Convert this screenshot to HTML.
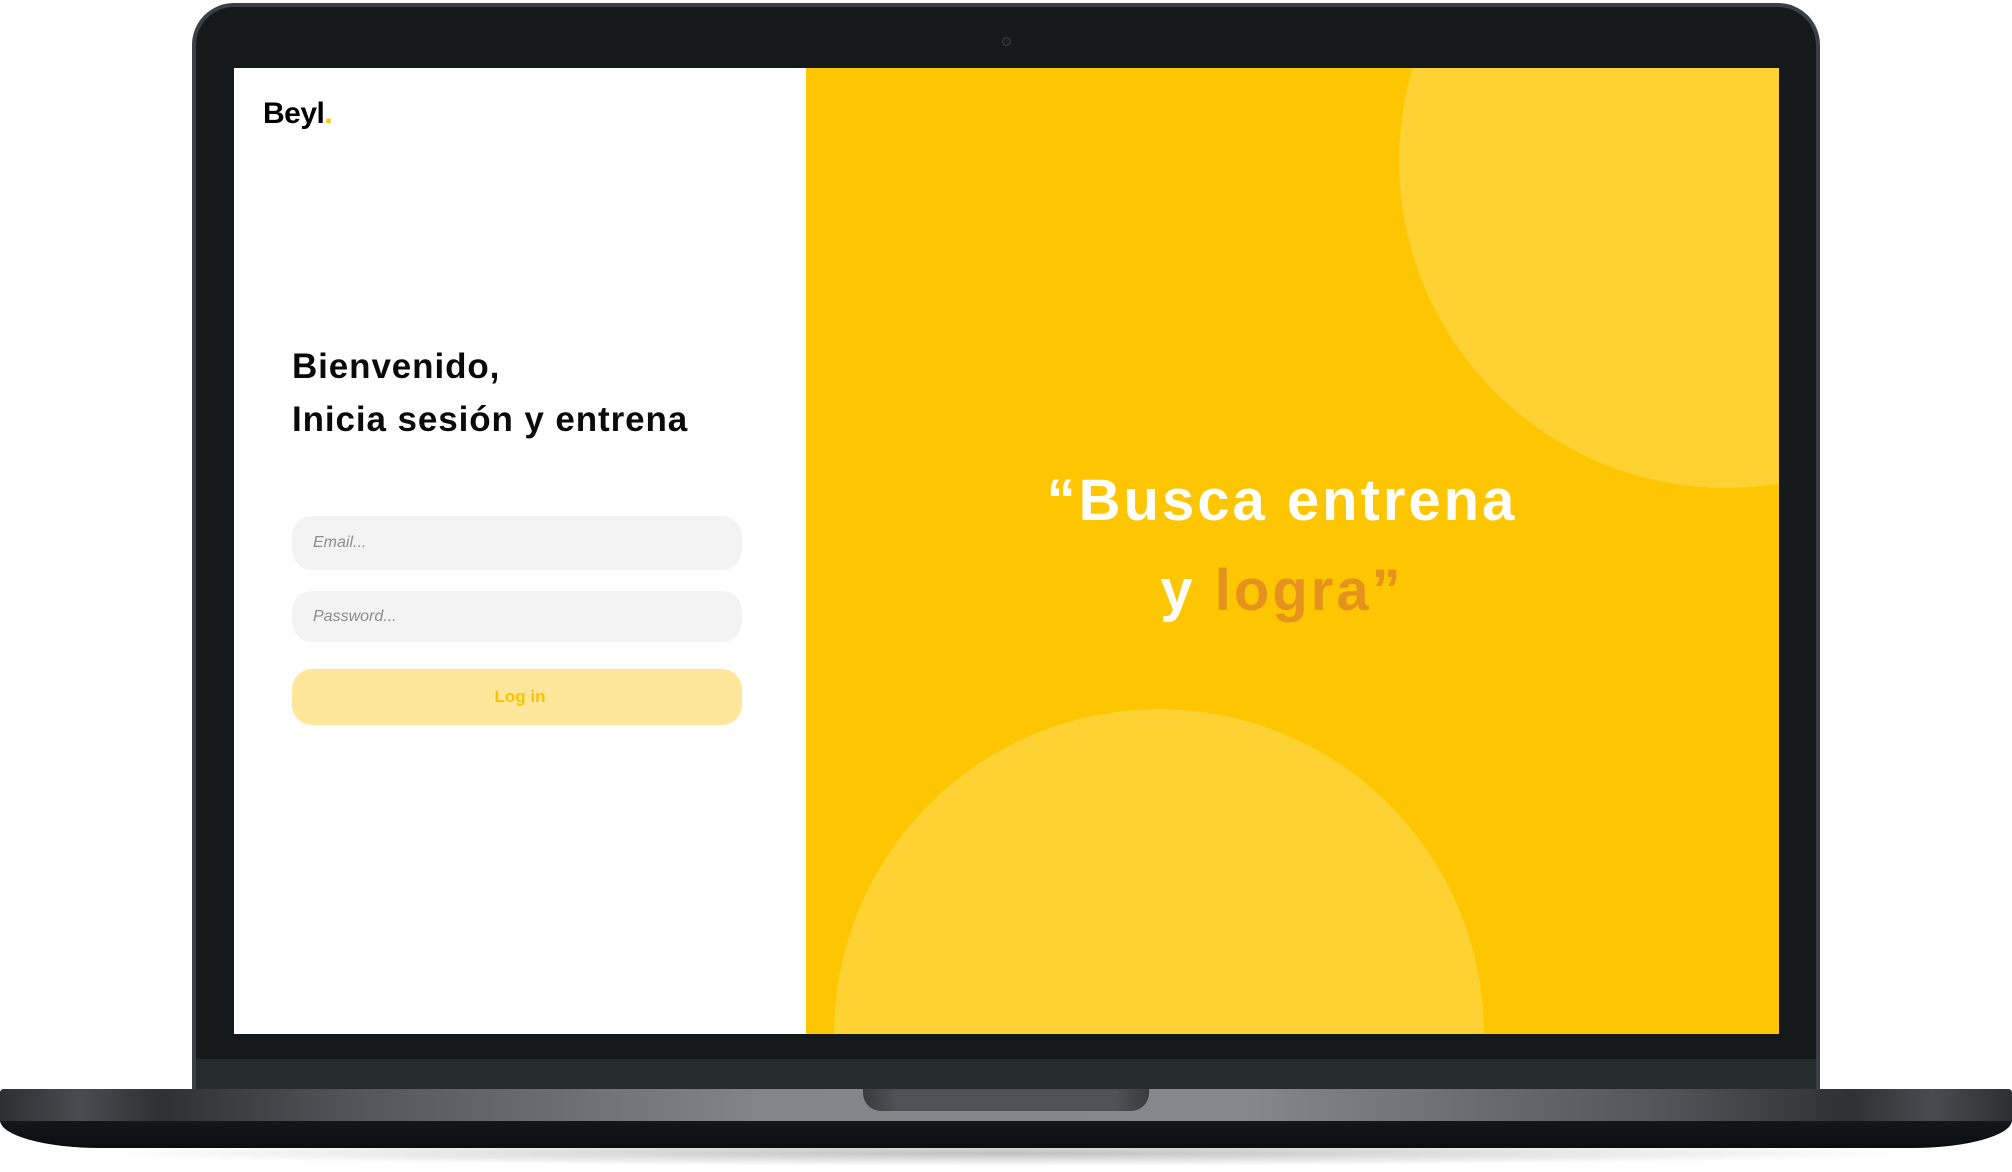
<!DOCTYPE html>
<html><head><meta charset="utf-8"><style>
*{margin:0;padding:0;box-sizing:border-box}
html,body{width:2012px;height:1172px;overflow:hidden}
body{background:#fff;position:relative;font-family:"Liberation Sans",sans-serif}
.abs{position:absolute}
</style></head><body>
<div class="abs" style="left:90px;top:1140px;width:1832px;height:26px;border-radius:50%;background:radial-gradient(ellipse at center,rgba(0,0,0,0.25),rgba(0,0,0,0) 70%)"></div>
<div class="abs" style="left:192px;top:3px;width:1628px;height:1100px;background:#3a4044;border-radius:42px 42px 10px 10px"></div>
<div class="abs" style="left:196px;top:7px;width:1620px;height:1090px;background:#151919;border-radius:38px 38px 8px 8px"></div>
<div class="abs" style="left:196px;top:1059px;width:1620px;height:32px;background:#262b2e"></div>
<div class="abs" style="left:1002px;top:37px;width:9px;height:9px;border-radius:50%;border:1px solid #3b4144;background:#1c2022"></div>
<div class="abs" style="left:234px;top:68px;width:1545px;height:966px;background:#fec501;overflow:hidden">
  <div class="abs" style="left:0;top:0;width:572px;height:966px;background:#fff"></div>
  <div class="abs" style="left:1165px;top:-235px;width:655px;height:655px;border-radius:50%;background:#fed233"></div>
  <div class="abs" style="left:600px;top:641px;width:650px;height:650px;border-radius:50%;background:#fed233"></div>
  <div class="abs" style="left:29px;top:29px;font-size:30px;font-weight:bold;color:#000;letter-spacing:-0.5px">Beyl<span style="color:#fec501">.</span></div>
  <div class="abs" style="left:58px;top:272px;font-size:35px;font-weight:bold;color:#0a0a0a;line-height:53px;letter-spacing:0.9px">Bienvenido,<br>Inicia sesión y entrena</div>
  <div class="abs" style="left:58px;top:448px;width:450px;height:54px;border-radius:20px;background:#f3f3f3;padding-left:21px;line-height:54px;font-size:16px;font-style:italic;color:#8d8d8d">Email...</div>
  <div class="abs" style="left:58px;top:523px;width:450px;height:51px;border-radius:20px;background:#f3f3f3;padding-left:21px;line-height:51px;font-size:16px;font-style:italic;color:#8d8d8d">Password...</div>
  <div class="abs" style="left:58px;top:601px;width:450px;height:56px;border-radius:20px;background:#fee69b;text-align:center;line-height:56px;font-size:17px;font-weight:bold;color:#fcc200;padding-left:6px">Log in</div>
  <div class="abs" style="left:740px;top:388px;width:616px;text-align:center;font-size:58px;font-weight:bold;color:#fff;line-height:90px;letter-spacing:3px">“Busca entrena<br>y <span style="color:#e5921f">logra”</span></div>
</div>
<div class="abs" style="left:0;top:1089px;width:2012px;height:59px;border-radius:4px 4px 100px 100px / 4px 4px 28px 28px;background:linear-gradient(#1f2125,#0c0d10);overflow:hidden">
  <div class="abs" style="left:0;top:0;width:2012px;height:32px;background:linear-gradient(90deg,#2e2f33 0%,#4a4b50 4%,#2f3034 8%,#55565b 18%,#84858a 38%,#86878c 62%,#55565b 82%,#2f3034 92%,#4a4b50 96%,#2e2f33 100%)"></div>
</div>
<div class="abs" style="left:863px;top:1089px;width:286px;height:22px;border-radius:0 0 18px 18px;background:linear-gradient(90deg,#3a3b3f,#505156 12%,#505156 88%,#3a3b3f)"></div>
</body></html>
